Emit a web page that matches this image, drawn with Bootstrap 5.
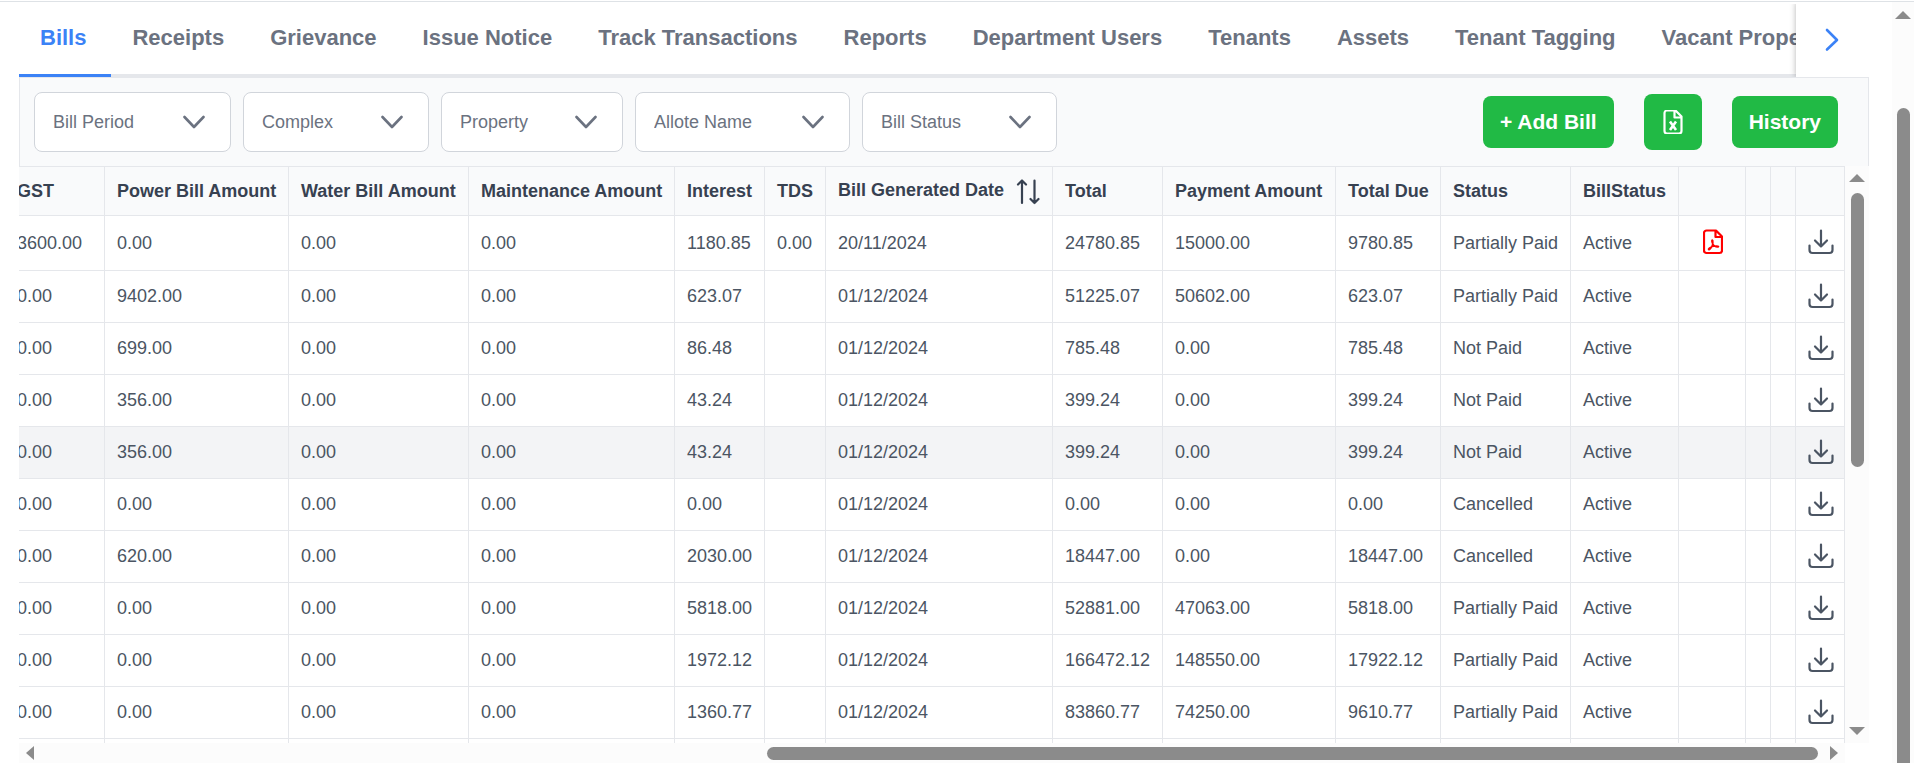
<!DOCTYPE html>
<html lang="en">
<head>
<meta charset="utf-8">
<meta name="viewport" content="width=device-width, initial-scale=1">
<title>Bills</title>
<link href="https://cdn.jsdelivr.net/npm/bootstrap@5.3.0/dist/css/bootstrap.min.css" rel="stylesheet">
<style>
body{font-family:"Liberation Sans",Arial,sans-serif;font-size:18px;color:#4b5563;overflow:hidden}
.page{height:100vh;padding-top:1px}
.page-inner{border-top:1px solid #dee2e6}
.content{padding:0 23px 0 19px;min-width:0}
.tabbar{height:75px}
.tabs{flex-wrap:nowrap;overflow:hidden;box-shadow:inset 0 -3px #e5e7eb}
.tabs .nav-link{font-size:22px;line-height:28px;font-weight:700;color:#6b7280;white-space:nowrap;padding:22px 25px 22px 21px;border-radius:0;border-bottom:3px solid transparent}
.tabs .nav-link.active{color:#3b82f6;border-bottom-color:#3b82f6}
.tabnext{width:73px;border:0;background:#fff;color:#3b82f6;box-shadow:0 0 6px rgba(0,0,0,.3);clip-path:inset(2px 0 0 -8px)}
.tools{background:#f9fafb;border:1px solid #e5e7eb;border-bottom:0;height:89px;padding:0 30px 0 14px}
.picks{gap:12px}
.actions{gap:30px}
.pick{height:60px;border:1px solid #d1d5db;border-radius:8px;background:#fff;position:relative}
.pick select{appearance:none;border:0;background:transparent;width:100%;height:100%;padding:0 18px;font-size:18px;color:#6b7280}
.pick svg{position:absolute;right:25px;top:19px;pointer-events:none}
.go{background:#21ba45;color:#fff;font-size:21px;line-height:24px;font-weight:700;border-radius:8px;padding:14px 17px;border:0}
.go-icon{padding:16px 17px}
.grid-area{min-height:0}
.rows{overflow:hidden;min-width:0}
.bills{table-layout:fixed;width:1840px;flex:none;border-collapse:separate;border-spacing:0;margin:0}
.bills th,.bills td{border:solid #e5e7eb;border-width:0 1px 1px 0;padding:0 11px 0 12px;height:52px;white-space:nowrap;vertical-align:middle}
.bills th{background:#f9fafb;color:#374151;font-weight:700;height:50px;border-top-width:1px}
.bills tbody tr:first-child td{height:55px}
.bills tr.hov td{background:#f3f4f6}
.sorticon{margin-left:12px}
.iconbtn{border:0;background:none;padding:0 0 2px;display:block;margin:0 auto;color:#4b5563}
.iconbtn svg{display:block}
.vbar{width:24px;background:#fcfcfc;padding:8px 0}
.hbar{height:20px;background:#fcfcfc;margin-right:24px;padding:1px 7px}
.pbar{width:22px;background:#fcfcfc;padding-top:9px}
.thumb{background:#8b8b8b;border-radius:7px}
.thumb-v{width:13px;height:274px;margin-top:11px}
.thumb-h{width:58%;height:13px;margin-right:12px}
.thumb-p{width:13px;margin-top:89px;border-radius:7px 7px 0 0}
</style>
</head>
<body>
<div class="page d-flex">
<div class="page-inner d-flex flex-grow-1 w-100">
<main class="content flex-grow-1 d-flex flex-column">
  <div class="tabbar d-flex flex-shrink-0">
    <ul class="nav tabs flex-grow-1" id="tabs"></ul>
    <button class="tabnext flex-shrink-0" aria-label="Next tabs"><svg width="28" height="28" viewBox="0 0 28 28" fill="none" stroke="currentColor" stroke-width="2.6" stroke-linecap="round" stroke-linejoin="round"><path d="M8 4l10 10-10 9.500"/></svg></button>
  </div>
  <div class="tools d-flex align-items-center flex-shrink-0">
    <div class="picks d-flex" id="picks"></div>
    <div class="actions d-flex align-items-center ms-auto">
      <button class="go">+ Add Bill</button>
      <button class="go go-icon" aria-label="Export to Excel"><svg class="d-block" width="24" height="24" viewBox="0 0 24 24" fill="none" stroke="currentColor" stroke-width="2.2" stroke-linejoin="round"><path d="M6 0h8.500l6 6v14.500a2.500 2.500 0 0 1-2.500 2.500H6a2.500 2.500 0 0 1-2.500-2.500v-18A2.500 2.500 0 0 1 6 0zM13.500 0v7h7" transform="translate(0 .5)"/><path stroke-width="2.600" d="M9 11.500l6 8.500M15 11.500L9 20"/></svg></button>
      <button class="go">History</button>
    </div>
  </div>
  <div class="grid-area d-flex flex-grow-1">
    <div class="rows d-flex justify-content-end align-items-start flex-grow-1">
      <table class="bills">
        <colgroup id="cols"></colgroup>
        <thead><tr id="head"></tr></thead>
        <tbody id="body"></tbody>
      </table>
    </div>
    <div class="vbar d-flex flex-column align-items-center flex-shrink-0">
      <svg width="16" height="8"><path d="M8 0l8 8H0z" fill="#8b8b8b"/></svg>
      <div class="thumb thumb-v"></div>
      <svg class="mt-auto" width="16" height="8"><path d="M8 8l8-8H0z" fill="#8b8b8b"/></svg>
    </div>
  </div>
  <div class="hbar d-flex align-items-center flex-shrink-0">
    <svg width="8" height="14"><path d="M0 7l8-7v14z" fill="#8b8b8b"/></svg>
    <div class="thumb thumb-h ms-auto"></div>
    <svg width="8" height="14"><path d="M8 7l-8-7v14z" fill="#8b8b8b"/></svg>
  </div>
</main>
<div class="pbar d-flex flex-column align-items-center flex-shrink-0">
  <svg width="16" height="8"><path d="M8 0l8 8H0z" fill="#8b8b8b"/></svg>
  <div class="thumb thumb-p flex-grow-1"></div>
</div>
</div>
</div>
<script src="https://cdn.jsdelivr.net/npm/bootstrap@5.3.0/dist/js/bootstrap.bundle.min.js"></script>
<script>
const $ = id => document.getElementById(id);
$('tabs').innerHTML = ['Bills','Receipts','Grievance','Issue Notice','Track Transactions','Reports','Department Users','Tenants','Assets','Tenant Tagging','Vacant Properties']
  .map((t,i)=>`<li class="nav-item"><a href="#" class="nav-link${i?'':' active'}">${t}</a></li>`).join('');
$('picks').innerHTML = [['Bill Period',197],['Complex',186],['Property',182],['Allote Name',215],['Bill Status',195]]
  .map(([t,w])=>`<div class="pick" style="width:${w}px"><select aria-label="${t}"><option>${t}</option></select><svg width="22" height="20" viewBox="0 0 22 20" fill="none" stroke="#6b7280" stroke-width="2.6" stroke-linecap="round" stroke-linejoin="round"><path d="M1.500 5l9.500 10L20.500 5"/></svg></div>`).join('');
const cols = [['GST',100],['Power Bill Amount',184],['Water Bill Amount',180],['Maintenance Amount',206],['Interest',90],['TDS',61],['Bill Generated Date',227],['Total',110],['Payment Amount',173],['Total Due',105],['Status',130],['BillStatus',108],['',67],['',25],['',25],['',49]];
$('cols').innerHTML = cols.map(c=>`<col style="width:${c[1]}px">`).join('');
const sort = '<svg class="sorticon" width="24" height="26" viewBox="0 0 24 26" fill="none" stroke="currentColor" stroke-width="2.2" stroke-linecap="round" stroke-linejoin="round"><path d="M6 24V1.500M2 5.500l4-4 4 4M18.500 1.500V24M14.500 20l4 4 4-4"/></svg>';
$('head').innerHTML = cols.map(c=>`<th>${c[0]}${c[0]=='Bill Generated Date'?sort:''}</th>`).join('');
const data = `3600.00|0.00|0.00|0.00|1180.85|0.00|20/11/2024|24780.85|15000.00|9780.85|Partially Paid
0.00|9402.00|0.00|0.00|623.07||01/12/2024|51225.07|50602.00|623.07|Partially Paid
0.00|699.00|0.00|0.00|86.48||01/12/2024|785.48|0.00|785.48|Not Paid
0.00|356.00|0.00|0.00|43.24||01/12/2024|399.24|0.00|399.24|Not Paid
0.00|356.00|0.00|0.00|43.24||01/12/2024|399.24|0.00|399.24|Not Paid
0.00|0.00|0.00|0.00|0.00||01/12/2024|0.00|0.00|0.00|Cancelled
0.00|620.00|0.00|0.00|2030.00||01/12/2024|18447.00|0.00|18447.00|Cancelled
0.00|0.00|0.00|0.00|5818.00||01/12/2024|52881.00|47063.00|5818.00|Partially Paid
0.00|0.00|0.00|0.00|1972.12||01/12/2024|166472.12|148550.00|17922.12|Partially Paid
0.00|0.00|0.00|0.00|1360.77||01/12/2024|83860.77|74250.00|9610.77|Partially Paid
||||||||||`;
const pdf = '<button class="iconbtn" aria-label="Open PDF"><svg width="20" height="26" viewBox="0 0 20 26" fill="none" stroke="#f00" stroke-width="2.2" stroke-linejoin="round"><path d="M3.500 1.500H13l6 6v14a2.500 2.500 0 0 1-2.500 2.500h-13A2.500 2.500 0 0 1 1 21.500V4a2.500 2.500 0 0 1 2.500-2.500zM12.500 1.500v6.500H19"/><path stroke-width="1.500" d="M9.300 11c-1.200.5.200 4.500 2.200 6s4.500 1.300 4 .4-4.500-.5-6.500.2-4 2.300-3.500 3 2.200-.8 3.300-3 1.700-6.300.5-6.600z"/></svg></button>';
const dl = '<button class="iconbtn" aria-label="Download"><svg width="26" height="26" viewBox="0 0 26 26" fill="none" stroke="currentColor" stroke-width="2.2" stroke-linecap="round" stroke-linejoin="round"><path d="M13 1.500v16M7 11.500l6 6 6-6M1.500 16.500v4.500a3 3 0 0 0 3 3h17a3 3 0 0 0 3-3v-4.500"/></svg></button>';
$('body').innerHTML = data.split('\n').map((r,i)=>`<tr${i==4?' class="hov"':''}>`+r.split('|').map(v=>`<td>${v}</td>`).join('')+`<td>${i<10?'Active':''}</td><td>${i?'':pdf}</td><td></td><td></td><td>${i<10?dl:''}</td></tr>`).join('');
</script>
</body>
</html>
